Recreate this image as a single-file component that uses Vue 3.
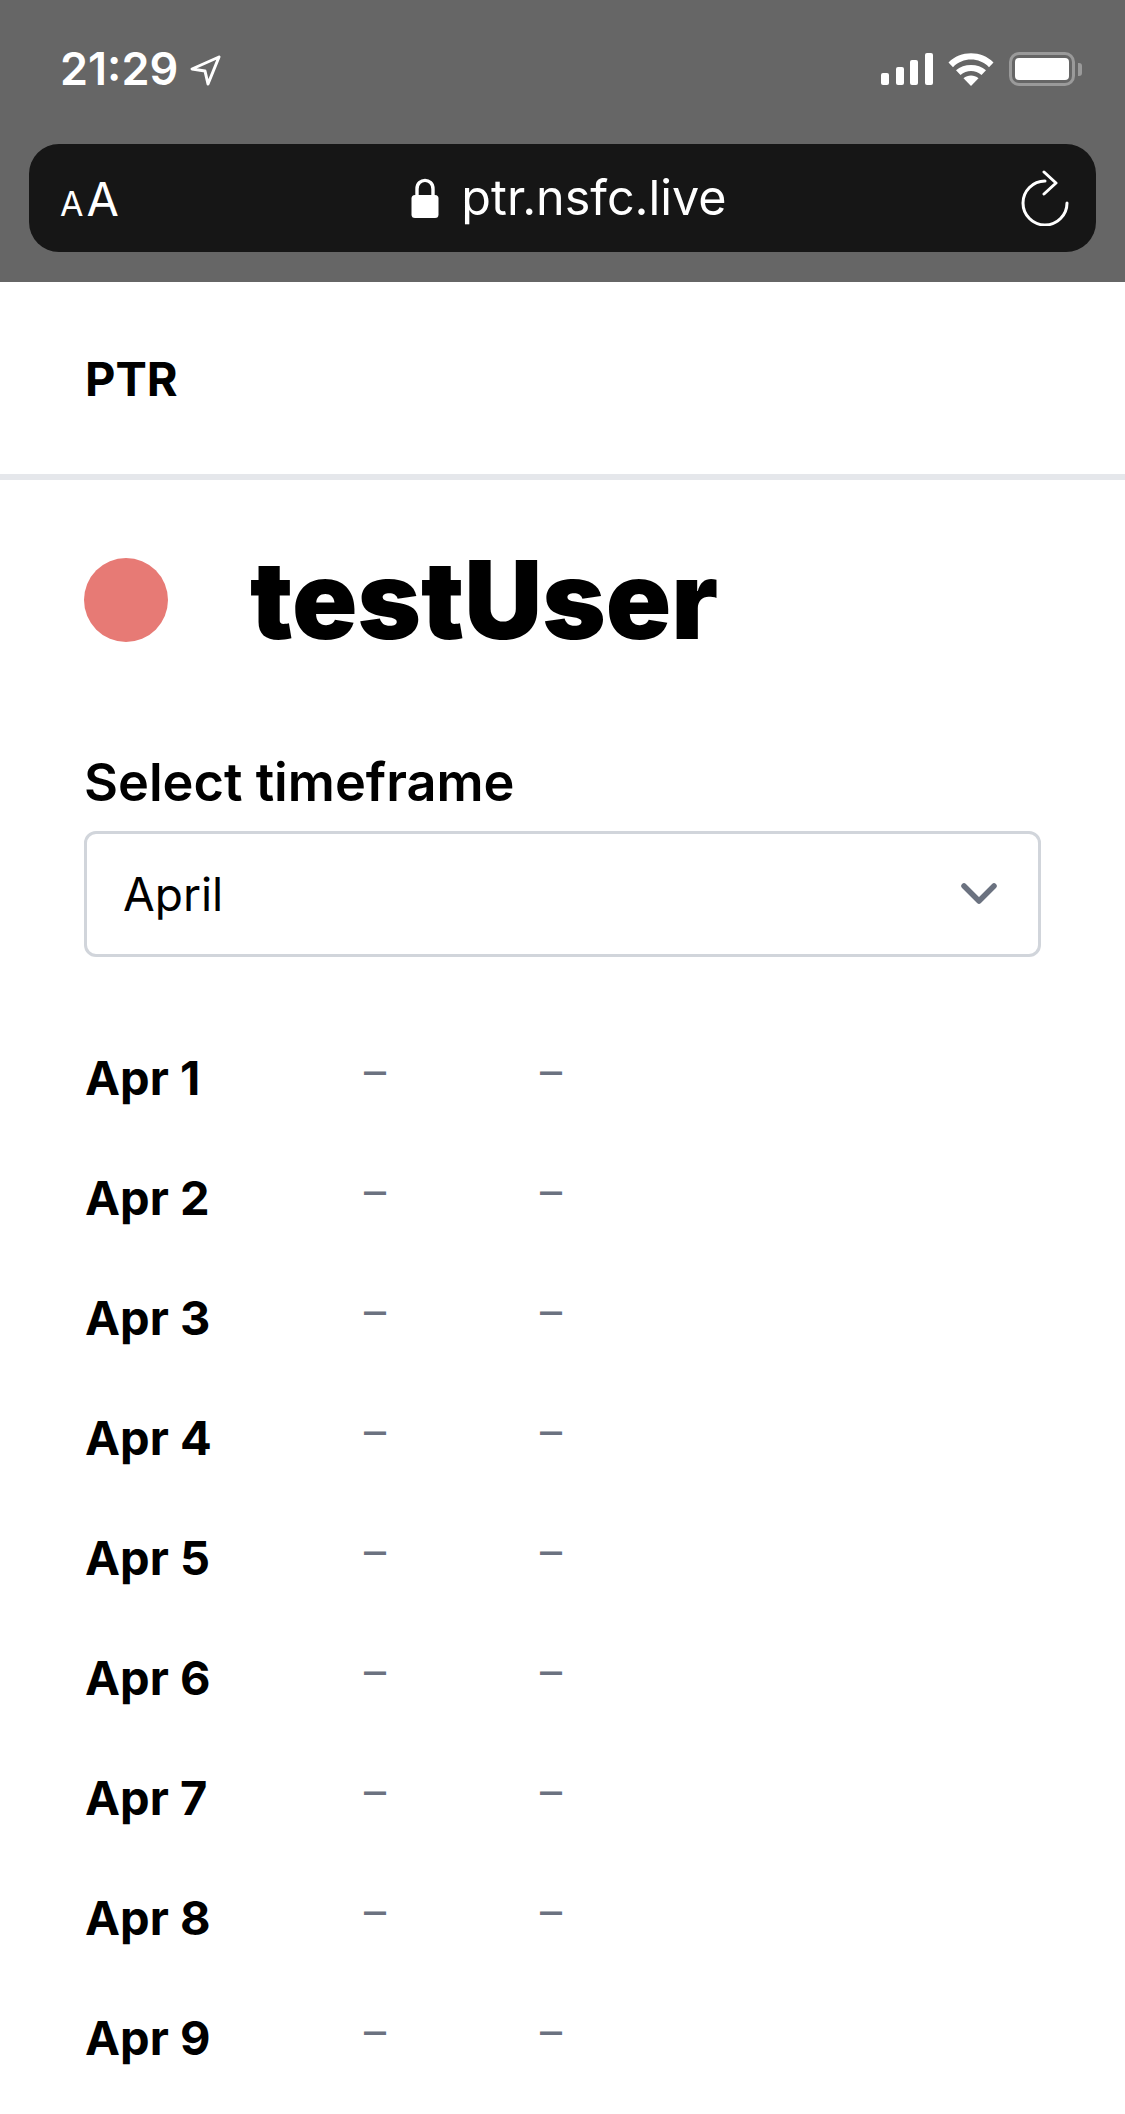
<script setup>
const days = ['Apr 1', 'Apr 2', 'Apr 3', 'Apr 4', 'Apr 5', 'Apr 6', 'Apr 7', 'Apr 8', 'Apr 9']
</script>

<template>
  <div class="page">
    <div class="browser">
      <div class="status">
        <div class="clock">
          <span class="time">21:29</span>
          <svg class="arrow" width="32" height="32" viewBox="0 0 32 32">
            <path d="M30 3 L3 15 L16 17 L19 30 Z" fill="none" stroke="#fff" stroke-width="3" stroke-linejoin="round" />
          </svg>
        </div>
        <div class="indicators">
          <div class="signal">
            <span class="bar b1"></span>
            <span class="bar b2"></span>
            <span class="bar b3"></span>
            <span class="bar b4"></span>
          </div>
          <svg class="wifi" width="46" height="34" viewBox="0 0 46 34">
            <path d="M23 34 L15.5 26.2 C19.8 22.6 26.2 22.6 30.5 26.2 Z" fill="#fff" />
            <path d="M12.5 23 L8 18.3 C15.8 11.2 30.2 11.2 38 18.3 L33.5 23 C27.5 17.6 18.5 17.6 12.5 23 Z" fill="#fff" />
            <path d="M5 15.2 L0.5 10.4 C12.5 -1.8 33.5 -1.8 45.5 10.4 L41 15.2 C31.2 5 14.8 5 5 15.2 Z" fill="#fff" />
          </svg>
          <div class="battery">
            <div class="cell"><span class="charge"></span></div>
            <span class="nub"></span>
          </div>
        </div>
      </div>
      <div class="urlbar">
        <div class="aa"><span class="small">A</span><span class="big">A</span></div>
        <div class="address">
          <svg class="lock" width="28" height="40" viewBox="0 0 28 40">
            <path d="M6 19 V11 C6 -0.5 22 -0.5 22 11 V19" fill="none" stroke="#fff" stroke-width="3.4" />
            <rect x="0.5" y="17" width="27" height="23" rx="3.5" fill="#fff" />
          </svg>
          <span class="host">ptr.nsfc.live</span>
        </div>
        <svg class="reload" width="50" height="56" viewBox="0 0 50 56">
          <path d="M25 11 A22 22 0 1 0 47 33" fill="none" stroke="#fff" stroke-width="3" stroke-linecap="round" />
          <path d="M24 2 L36 13 L24 24" fill="none" stroke="#fff" stroke-width="3" stroke-linecap="round" stroke-linejoin="round" />
        </svg>
      </div>
    </div>

    <header class="nav">PTR</header>

    <main class="content">
      <div class="user">
        <span class="avatar"></span>
        <h1>testUser</h1>
      </div>

      <label class="label" for="timeframe">Select timeframe</label>
      <div class="select-wrap">
        <select id="timeframe" class="select">
          <option>April</option>
        </select>
        <svg class="chevron" width="36" height="24" viewBox="0 0 36 24">
          <path d="M3 4 L18 19 L33 4" fill="none" stroke="#6b7280" stroke-width="5.5" stroke-linecap="round" stroke-linejoin="round" />
        </svg>
      </div>

      <div class="days">
        <div v-for="day in days" :key="day" class="day">
          <span class="date">{{ day }}</span>
          <span class="dash">–</span>
          <span class="dash">–</span>
        </div>
      </div>
    </main>
  </div>
</template>

<style>
html, body {
  margin: 0;
  background: #fff;
}
</style>

<style scoped>
.page {
  height: 2114px;
  overflow: hidden;
  font-family: Inter, "Liberation Sans", sans-serif;
  color: #000;
  background: #fff;
}
.browser {
  height: 282px;
  box-sizing: border-box;
  background: #666;
  padding: 0 29px;
  color: #fff;
}
.status {
  height: 144px;
  display: flex;
  justify-content: space-between;
  box-sizing: border-box;
  padding: 52px 14px 0 31px;
}
.clock {
  display: flex;
  align-items: flex-start;
  gap: 11px;
}
.time {
  font-size: 45px;
  font-weight: 600;
  line-height: 34px;
}
.arrow {
  margin-top: 2px;
}
.indicators {
  display: flex;
  align-items: flex-start;
  gap: 15px;
}
.signal {
  display: flex;
  align-items: flex-end;
  gap: 6.4px;
  height: 33px;
}
.bar {
  width: 8.2px;
  background: #fff;
  border-radius: 2px;
}
.b1 { height: 12px; }
.b2 { height: 18px; }
.b3 { height: 25px; }
.b4 { height: 32px; }
.battery {
  display: flex;
  align-items: center;
  gap: 3px;
}
.cell {
  width: 66px;
  height: 34px;
  box-sizing: border-box;
  border: 3px solid #9a9a9a;
  border-radius: 10px;
  padding: 3px;
}
.charge {
  display: block;
  height: 100%;
  background: #fff;
  border-radius: 4px;
}
.nub {
  width: 4px;
  height: 13px;
  background: #9a9a9a;
  border-radius: 0 3px 3px 0;
}
.urlbar {
  height: 108px;
  background: #161616;
  border-radius: 30px;
  display: grid;
  grid-template-columns: 1fr auto 1fr;
  align-items: center;
  padding: 0 26px 0 31px;
}
.aa {
  display: flex;
  align-items: baseline;
  gap: 3px;
  line-height: 1;
  font-weight: 400;
}
.small {
  font-size: 34px;
}
.big {
  font-size: 47px;
}
.address {
  display: flex;
  align-items: center;
  gap: 22px;
  padding-left: 8px;
}
.host {
  font-size: 48.5px;
  font-weight: 400;
  line-height: 60px;
}
.reload {
  justify-self: end;
}
.nav {
  height: 198px;
  box-sizing: border-box;
  border-bottom: 6px solid #e5e7eb;
  padding: 69px 85px 0;
  font-size: 47px;
  font-weight: 700;
  line-height: 56px;
}
.content {
  padding: 78px 84px 0;
}
.user {
  display: flex;
  align-items: center;
  gap: 82px;
  height: 84px;
}
.avatar {
  width: 84px;
  height: 84px;
  border-radius: 50%;
  background: #e77a75;
}
h1 {
  margin: 0;
  font-size: 108px;
  font-weight: 900;
  line-height: 84px;
}
.label {
  display: block;
  margin-top: 110px;
  font-size: 52.3px;
  font-weight: 600;
  line-height: 60px;
}
.select-wrap {
  position: relative;
  margin-top: 19px;
  width: 957px;
}
.select {
  display: block;
  width: 100%;
  height: 126px;
  box-sizing: border-box;
  appearance: none;
  border: 3px solid #d1d5db;
  border-radius: 12px;
  background: #fff;
  padding: 0 36px;
  font-family: inherit;
  font-size: 46px;
  color: #000;
}
.chevron {
  position: absolute;
  right: 44px;
  top: 51px;
}
.days {
  margin-top: 61px;
}
.day {
  display: grid;
  grid-template-columns: 280px 176px 1fr;
  height: 120px;
  align-items: center;
}
.date {
  font-size: 47px;
  font-weight: 700;
  padding: 0 0 2px 1px;
}
.dash {
  font-size: 44px;
  color: #6b7280;
  padding-bottom: 14px;
}
</style>
